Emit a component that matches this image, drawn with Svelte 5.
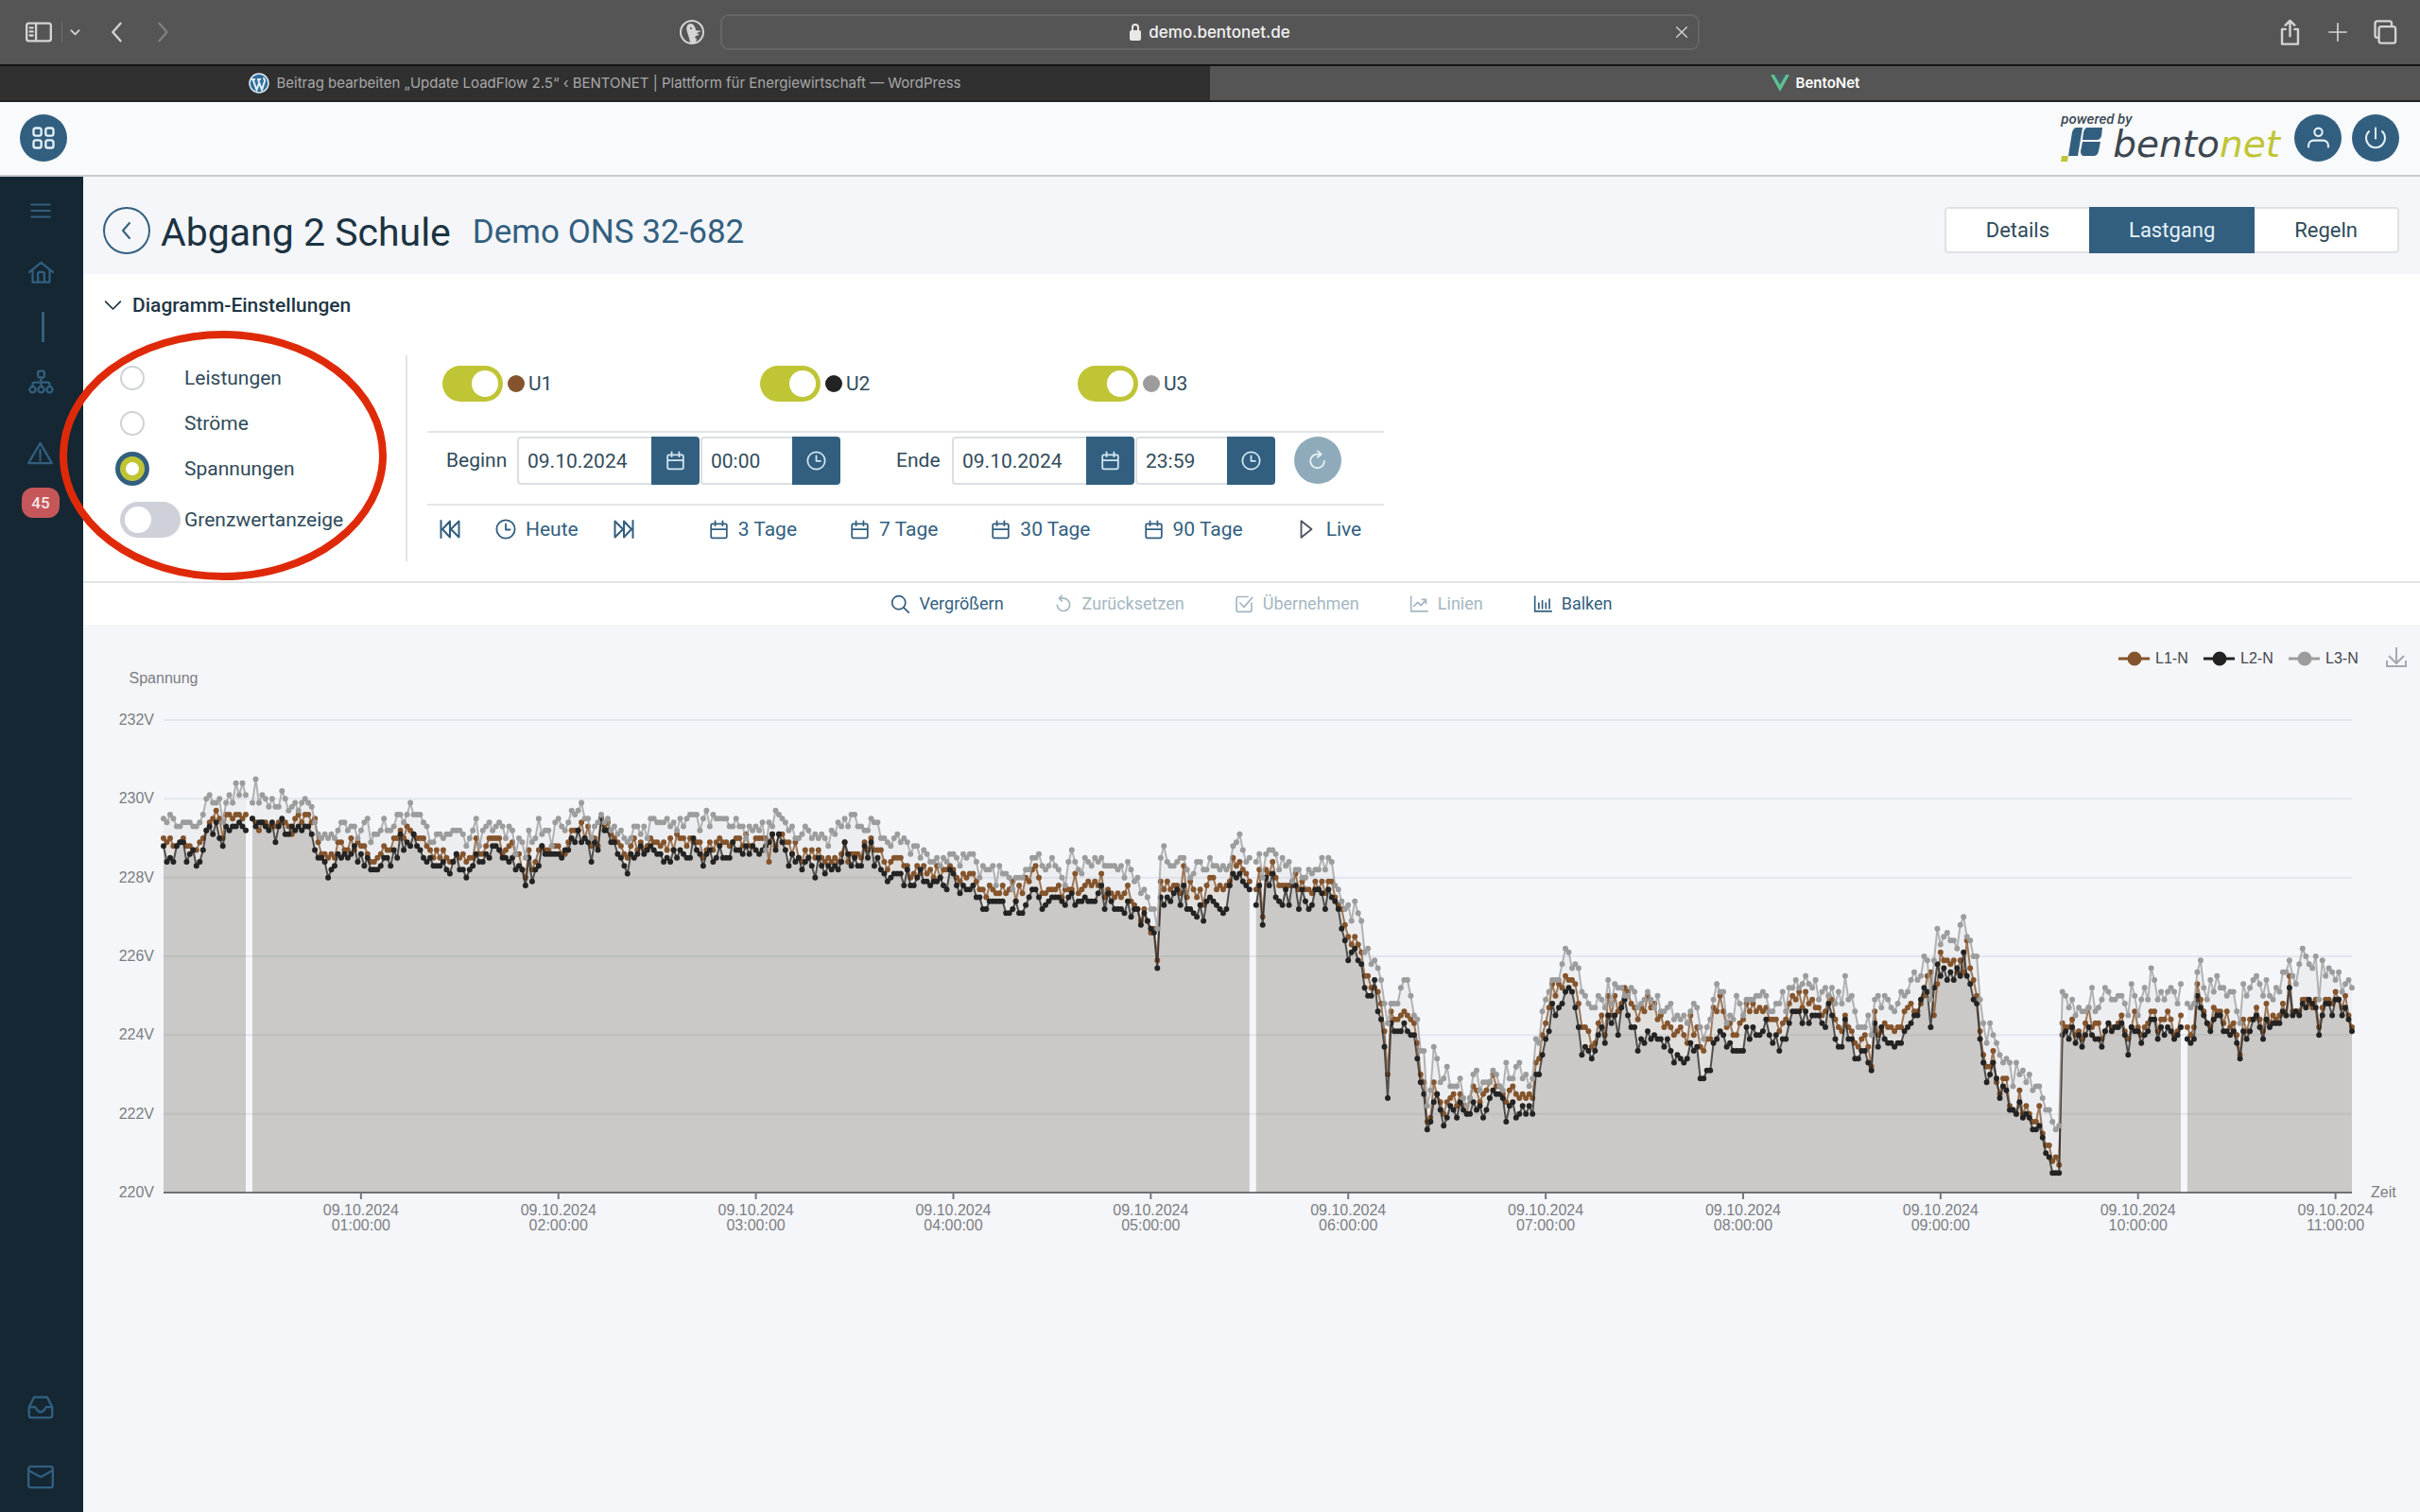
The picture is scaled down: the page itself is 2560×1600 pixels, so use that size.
<script>
  const icons = {
    grid: 'M5 3h3a2 2 0 0 1 2 2v3a2 2 0 0 1-2 2H5a2 2 0 0 1-2-2V5a2 2 0 0 1 2-2zM16 3h3a2 2 0 0 1 2 2v3a2 2 0 0 1-2 2h-3a2 2 0 0 1-2-2V5a2 2 0 0 1 2-2zM5 14h3a2 2 0 0 1 2 2v3a2 2 0 0 1-2 2H5a2 2 0 0 1-2-2v-3a2 2 0 0 1 2-2zM16 14h3a2 2 0 0 1 2 2v3a2 2 0 0 1-2 2h-3a2 2 0 0 1-2-2v-3a2 2 0 0 1 2-2z',
    menu: 'M3 6h18M3 12h18M3 18h18',
    home: 'M1 11.500L12 2.500l11 9M4 10v11h16V10M9 21v-8a1.500 1.500 0 0 1 1.500-1.500h3A1.500 1.500 0 0 1 15 13v8',
    sitemap: 'M10.500 1.500h3a1.500 1.500 0 0 1 1.500 1.500v3a1.500 1.500 0 0 1-1.500 1.500h-3A1.500 1.500 0 0 1 9 6V3a1.500 1.500 0 0 1 1.500-1.500zM12 7.500V12M4 16v-2a2 2 0 0 1 2-2h12a2 2 0 0 1 2 2v2M12 12v4M4 16a2.800 2.800 0 1 1 0 5.600a2.800 2.800 0 1 1 0-5.600zM12 16a2.800 2.800 0 1 1 0 5.600a2.800 2.800 0 1 1 0-5.600zM20 16a2.800 2.800 0 1 1 0 5.600a2.800 2.800 0 1 1 0-5.600z',
    warning: 'M12 2.500L23 21.500H1zM12 9v6.500M12 17.500v1.500',
    inbox: 'M1.500 12L6 3h12l4.500 9v7.500a2 2 0 0 1-2 2h-17a2 2 0 0 1-2-2zM1.500 12H7c1 0 1.500 4.500 5 4.500S16 12 17 12h5.500',
    mail: 'M3 2.500h18a2 2 0 0 1 2 2v15a2 2 0 0 1-2 2H3a2 2 0 0 1-2-2v-15a2 2 0 0 1 2-2zM1 6l11 6 11-6',
    user: 'M12 2.500a4 4 0 1 1 0 8a4 4 0 1 1 0-8zM2 21.500v-1.500c0-3 2.500-5 5-5h10c2.500 0 5 2 5 5v1.500',
    power: 'M12 1.500v11M5 5a10 10 0 1 0 14 0',
    left: 'M15 4l-7 8 7 8',
    right: 'M9 4l7 8-7 8',
    down: 'M3 7l9 9 9-9',
    calendar: 'M4 5h16a1.500 1.500 0 0 1 1.500 1.500V20a2 2 0 0 1-2 2h-15a2 2 0 0 1-2-2V6.500A1.500 1.500 0 0 1 4 5zM2.500 11.500h19M7.500 1.500V7M16.500 1.500V7',
    clock: 'M12 1.500a10.500 10.500 0 1 1 0 21a10.500 10.500 0 1 1 0-21zM12 6v6.500h5',
    refresh: 'M12 1.500l4 3.500-4 3.500M15.500 5h-4a8 8 0 1 0 8 8',
    undo: 'M10 1.500L6.500 5 10 8.500M7 5h5a8 8 0 1 1-8 8.500',
    first: 'M2.500 3v18M12 3.500v17L4 12zM21.500 3.500v17L13 12z',
    last: 'M21.500 3v18M12 3.500v17L20 12zM2.500 3.500v17L11 12z',
    play: 'M6 2.500v19L18 12z',
    search: 'M10.500 2a8.500 8.500 0 1 1 0 17a8.500 8.500 0 1 1 0-17zM17 17l6 6',
    check: 'M21.500 11v9a2 2 0 0 1-2 2h-15a2 2 0 0 1-2-2V5a2 2 0 0 1 2-2H17M7 11l5 5L22.500 4',
    line: 'M2 2.500v19h21M5.500 15l5-5 4 4 6.500-7M16 6.500h5v5',
    bars: 'M2 2.500v19h21M7 11v7M11.500 8v10M16 11v7M20.500 6v12',
    close: 'M4 4l16 16M20 4L4 20',
    share: 'M8 9H5v13h14V9h-3M12 15V2M8 5.500L12 1.500l4 4',
    plus: 'M12 1v22M1 12h22',
    copies: 'M8.500 7h11a2 2 0 0 1 2 2v11a2 2 0 0 1-2 2h-11a2 2 0 0 1-2-2V9a2 2 0 0 1 2-2zM6.500 17H5a2 2 0 0 1-2-2V4a2 2 0 0 1 2-2h11a2 2 0 0 1 2 2v3',
    panel: 'M3 4h18a2 2 0 0 1 2 2v12a2 2 0 0 1-2 2H3a2 2 0 0 1-2-2V6a2 2 0 0 1 2-2zM9.500 4v16M4 8h2.500M4 11.500h2.500M4 15h2.500'
  };

  const modes = ['Leistungen', 'Ströme', 'Spannungen'];
  const phases = [
    { name: 'U1', tone: 'brown' },
    { name: 'U2', tone: 'black' },
    { name: 'U3', tone: 'grey' }
  ];
  const ranges = ['3 Tage', '7 Tage', '30 Tage', '90 Tage'];
  const tools = [
    { label: 'Vergrößern', icon: 'search', off: false },
    { label: 'Zurücksetzen', icon: 'undo', off: true },
    { label: 'Übernehmen', icon: 'check', off: true },
    { label: 'Linien', icon: 'line', off: true },
    { label: 'Balken', icon: 'bars', off: false }
  ];

  // One reading per minute, in tenths of a volt above 220 V: [first minute, readings].
  const rawL1 = [
    [0, '90 89 90 88 88 89 90 88 88 87 87 89 90 92 94 95 97 95 90 96 96 95 96 96 95 96'],
    [27, '95 94 92 94 94 93 93 93 94 94 94 93 91 95 96 94 96 96 94 95 89 86 86 87'],
    [50, '85 86 85 89 89 87 87 90 87 89 88 88 86 84 84 85 86 88 87 87 90 90 92 90 93 92'],
    [76, '91 90 90 90 88 87 85 87 85 87 85 84 84 86 85 86 84 85 85 90 86 86 88 90 90 90 90'],
    [103, '86 87 88 89 86 86 82 80 87 82 84 87 88 87 87 88 88 88 86 86 89 92 92 92 94'],
    [128, '90 93 88 90 88 95 93 94 91 90 89 88 86 85 88 90 87 89 87 88 90 89 89 88 89 87 90 87 91'],
    [157, '90 90 88 90 89 89 89 85 87 89 87 89 90 89 89 88 89 90 90 88 91 88 88 90 90 90 90'],
    [184, '84 91 88 91 91 89 89 86 89 85 84 87 85 87 85 87 85 84 85 84 85 84 86 89 84 86'],
    [210, '86 86 85 89 87 90 87 87 87 84 82 84 85 85 85 83 83 80 81 83 81 83 81 82 80 83 80'],
    [237, '82 82 83 82 80 79 81 80 81 81 79 77 77 75 78 77 76 76 78 76 77 79 74 78 76 80 79 82 83'],
    [266, '80 76 76 77 77 77 78 75 77 77 77 81 76 77 78 79 78 79 78 81 75 77 76 75 76 75 76 78'],
    [294, '74 73 72 69 72 69 66 67 59 79 77 79 77 78 78 76 83 75 79 77 75 77 73 78 80 80 77 78 77 78'],
    [324, '79 85 83 84 82 81 79'],
    [332, '77 82 70 82 81 84 80 78 78 78 78 78 81 77 79 77 77 76 79 77 79 76 79 79 75 73 72'],
    [359, '68 65 63 65 63 61 55 55 52 52 51 48 41 30 46 44 44 45 46 45 44 43 38 30 28'],
    [384, '18 19 28 25 23 20 23 24 25 22 25 22 20 24 27 26 23 25 26 28 30 27 27 25'],
    [408, '23 26 27 25 24 25 24 25 24 33 34 40 43 47 53 50 53 52 55 54 54 53 48 42 42 41'],
    [434, '37 38 43 45 40 50 45 50 46 48 52 51 48 47 44 47 46 50 47 48 44 45 42 43 42 40'],
    [460, '41 42 40 38 45 40 42 37 36 39 39 47 46 50 46 42 43 40 40 43 44'],
    [481, '48 46 48 46 47 46 47 44 44 44 41 43 44 48 50 49 51 47 51 48 49 47 47 45 46'],
    [506, '50 49 44 42 41 45 42 41 38 37 39 40 37 32 46 40 41 43 42 42 41 42 42'],
    [529, '46 47 48 46 46 48 50 55 56 45 53 61 59 59 58 59 56 59 56 64 57 54 50 52'],
    [552, '41 35 32 32 36 28 25 29 29 22 21 20 26 20 22 20 18 18 22'],
    [571, '15 12 12 8 9 7 43 42 42 44 40 41 39 43 47 42 43 43 39 41 43 42 42 43'],
    [595, '45 41 39 42 46 42 40 42 43 46 46 41 44 44 46 44 40 41 45'],
    [615, '42 40 42 53 49 46 43 42 47 46 46 43 46 42 43 40 35 44 41 44 44 47 44 41'],
    [639, '48 43 45 44 45 48 45 55 46 46 46 49 49 48 47 49 42 47 49 49 48 51 49 47 50 45 42']
  ];
  const rawL2 = [
    [0, '88 84 85 84 88 89 89 84 86 87 83 84 87 92 93 91 94 90 88 93 92 93 93 94 93 92'],
    [27, '95 93 94 94 93 92 94 89 93 95 91 91 93 92 93 92 93 93 91 87 85 85 84'],
    [50, '80 82 83 86 85 86 85 86 88 84 86 83 85 82 82 82 83 85 85 83 87 85 91 87 89 88'],
    [76, '91 88 87 85 84 85 83 83 83 84 82 81 84 86 82 82 80 82 83 86 84 84 86 85 88 88 87'],
    [103, '85 85 84 85 82 83 82 78 85 79 82 83 88 86 86 86 86 86 85 87 87 90 89 92 89'],
    [128, '90 89 84 89 87 95 92 92 89 89 86 85 83 81 86 85 86 88 86 87 88 87 86 86 84 85 84 87 85'],
    [157, '87 86 85 85 90 87 86 83 86 87 84 85 88 85 85 85 89 87 87 86 88 86 88 87 86 87 88'],
    [184, '89 91 87 91 89 87 83 86 84 85 82 84 85 83 80 85 83 81 83 82 83 82 84 89 86 83'],
    [210, '85 83 83 88 85 89 83 85 82 81 79 80 81 81 81 78 82 78 78 80 82 79 79 78 79 79 80'],
    [237, '78 77 82 81 78 76 78 77 77 78 75 75 72 72 74 74 74 74 74 71 71 72 74 71 71 73 75 77 77'],
    [266, '75 72 73 74 75 75 75 74 73 75 76 73 74 74 75 74 74 74 76 78 72 76 74 72 72 72 71 74'],
    [294, '70 72 72 68 71 69 67 66 57 75 73 75 74 76 77 73 78 72 72 71 70 73 69 74 75 74 73 72 71 72'],
    [324, '78 81 80 81 79 78 77'],
    [332, '73 78 68 80 78 81 75 74 73 77 73 79 78 72 77 74 72 73 77 77 76 72 77 75 74 72 67'],
    [359, '64 59 61 62 59 58 52 50 50 54 46 44 37 24 43 41 41 41 43 41 40 40 34 28 25'],
    [384, '16 18 23 25 21 17 19 22 21 19 23 21 20 20 23 21 22 19 21 24 26 25 25 24'],
    [408, '18 22 23 19 20 22 20 22 20 30 30 35 39 41 48 45 47 48 51 52 51 47 42 35 37 36'],
    [434, '34 36 40 42 38 45 43 45 40 47 49 45 42 42 36 39 38 41 39 40 39 39 37 39 36 33'],
    [460, '35 34 33 34 38 36 37 29 29 31 31 38 39 41 40 37 38 36 36 36 36'],
    [481, '42 39 42 40 40 41 44 40 38 40 36 39 39 43 46 46 46 43 46 43 45 45 45 43 42'],
    [506, '48 45 39 37 37 44 39 39 34 34 36 36 33 31 43 37 42 39 38 38 37 38 38'],
    [529, '41 42 43 45 45 49 52 51 42 52 58 55 57 54 56 54 57 55 61 55 53 49 48'],
    [552, '39 33 28 30 33 29 24 27 26 21 21 20 23 19 20 19 16 16 17'],
    [571, '14 10 9 5 5 5 40 41 39 42 38 40 37 40 42 40 39 39 37 41 43 41 42 42'],
    [595, '43 40 35 42 41 41 38 40 41 44 44 39 42 40 42 41 39 40 42'],
    [615, '39 38 39 50 47 45 43 41 44 45 45 41 41 40 41 38 34 41 39 41 44 45 42 39'],
    [639, '44 42 43 43 43 46 45 52 45 46 45 48 47 49 48 47 40 45 48 48 45 49 49 45 47 44 41']
  ];
  const rawL3 = [
    [0, '95 94 96 95 93 93 94 94 94 93 93 94 96 100 101 99 99 100 94 99 101 99 104 101 104 101'],
    [27, '99 105 99 101 100 98 100 98 98 102 100 97 98 99 97 99 100 99 98 94 91 90'],
    [49, '91 90 91 90 92 94 94 92 93 93 90 92 94 95 89 91 91 92 95 92 92 93 96 96 94 96 99'],
    [76, '96 96 96 94 93 89 89 91 91 90 91 91 92 92 92 91 88 90 92 95 88 92 93 94 92 93 94'],
    [103, '93 90 93 92 86 90 89 85 92 89 90 95 91 92 92 88 94 95 93 92 94 97 96 97 99'],
    [128, '95 95 90 93 94 96 94 95 92 93 91 92 90 89 90 93 93 91 93 90 95 95 94 94 94 95 93 94 92'],
    [157, '95 93 95 96 96 96 92 95 97 93 96 95 95 95 95 93 93 95 93 93 90 93 92 93 92 94'],
    [183, '87 94 93 97 96 95 94 92 93 90 90 91 93 92 90 91 90 91 90 88 92 91 94 93 95 93 96'],
    [211, '93 93 92 92 95 94 94 90 90 89 88 90 91 89 90 89 86 88 88 85 87 86 84 84 85 83 85 84'],
    [239, '86 86 85 83 86 85 86 86 84 80 83 82 82 83 78 83 81 81 80 77 80 80 80 82 82 85'],
    [265, '85 86 83 82 83 85 83 82 80 78 84 87 84 82 81 85 84 83 85 84 85 83 83 83 83 82'],
    [291, '83 80 84 82 79 80 76 77 75 72 72 67 85 88 84 83 83 84 85 85 82 80 81 84 84 82 82 85 83'],
    [320, '83 82 83 82 83 88 89 91 87 84 85'],
    [332, '84 86 80 86 87 87 86 82 85 83 84 79 82 82 80 80 82 81 82 82 85 82 85 84 78 77 74'],
    [359, '72 73 69 74 71 69 61 62 58 59 57 54 48 43 48 48 48 52 54 54 50 45 44 36 36'],
    [384, '22 26 37 34 28 29 32 27 27 27 29 24 22 24 30 31 26 28 28 28 31 30 27 26'],
    [408, '33 29 29 32 33 29 30 27 29 39 38 46 49 51 54 54 54 58 62 61 57 58 57 51 50 48'],
    [434, '47 47 50 49 47 54 48 53 52 52 50 50 52 51 47 48 49 51 49 47 50 46 46 47 48 44'],
    [460, '45 44 45 43 46 48 47 42 39 42 44 49 53 51 51 43 45 44 50 48 45'],
    [481, '49 49 49 50 50 51 50 46 46 48 48 51 46 52 52 54 52 53 55 53 52 54 49 51 52'],
    [506, '50 52 48 51 48 55 49 50 46 42 42 42 45 40 49 50 47 50 49 47 46 48 51'],
    [529, '50 51 54 56 54 55 60 59 49 59 67 63 65 66 64 64 62 68 70 65 64 60 60'],
    [552, '49 43 38 43 40 38 35 33 34 33 27 33 30 31 28 30 26 27 27'],
    [571, '24 21 21 18 16 17 51 50 47 49 45 47 46 46 47 52 46 47 49 52 51 49 49 50'],
    [595, '50 48 45 53 50 45 49 52 49 57 54 49 51 49 51 52 51 48 53'],
    [615, '48 47 48 56 59 52 49 54 51 55 52 52 50 51 51 46 43 53 50 52 54 55 53 50'],
    [639, '54 50 49 52 51 56 56 59 55 53 58 62 60 58 57 60 49 59 55 57 56 54 56 51 53 54 52']
  ];

  const LAST = 665;
  const gaps = [26, 331, 614];

  function expand(raw) {
    const out = new Array(LAST + 1).fill(null);
    for (const [start, text] of raw) {
      text.split(' ').forEach((v, k) => {
        if (start + k <= LAST) out[start + k] = 220 + Number(v) / 10;
      });
    }
    for (let i = 1; i <= LAST; i++) if (out[i] === null) out[i] = out[i - 1];
    for (const g of gaps) out[g] = null;
    return out;
  }

  const series = [
    { id: 'L1-N', tone: 'brown', data: expand(rawL1) },
    { id: 'L2-N', tone: 'black', data: expand(rawL2) },
    { id: 'L3-N', tone: 'grey', data: expand(rawL3) }
  ];

  const top = 101;
  const plotHeight = 500;
  const left = 85;
  let width = $state(2472);
  const right = $derived(width - 72);
  const levels = [232, 230, 228, 226, 224, 222, 220];
  const hours = [1, 2, 3, 4, 5, 6, 7, 8, 9, 10, 11];
  const base = top + plotHeight;

  const x = (i) => left + ((right - left) * i) / LAST;
  const y = (v) => top + ((232 - v) * plotHeight) / 12;

  function build(data) {
    let line = '';
    let area = '';
    let dots = '';
    let open = false;
    data.forEach((v, i) => {
      if (v === null) {
        if (open) area += `L${x(i - 1)} ${base}Z`;
        open = false;
        return;
      }
      const px = x(i).toFixed(1);
      const py = y(v).toFixed(1);
      line += `${open ? 'L' : 'M'}${px} ${py}`;
      area += open ? `L${px} ${py}` : `M${px} ${base}L${px} ${py}`;
      dots += `M${px} ${py}h0`;
      open = true;
    });
    if (open) area += `L${x(data.length - 1)} ${base}Z`;
    return { line, area, dots };
  }

  const shapes = $derived(series.map((s) => ({ tone: s.tone, ...build(s.data) })));
</script>

{#snippet icon(name, size = 24)}
  <svg class="icon" width={size} height={size} viewBox="0 0 24 24" aria-hidden="true"><path d={icons[name]} /></svg>
{/snippet}

<div class="page">
  <div class="browser">
    <div class="side">
      <button aria-label="Seitenleiste">{@render icon('panel', 28)}</button>
      <span class="bar"></span>
      <button class="tiny" aria-label="Tabgruppen">{@render icon('down', 11)}</button>
      <button class="back" aria-label="Zurück">{@render icon('left', 28)}</button>
      <button class="dim" aria-label="Vor">{@render icon('right', 28)}</button>
    </div>
    <div class="middle">
      <svg width="26" height="26" viewBox="0 0 26 26" aria-hidden="true">
        <circle cx="13" cy="13" r="12" fill="none" stroke="#d4d4d4" stroke-width="2" />
        <path d="M8 6c1-2 5-3 7 0 1 1 2 3 2 5l6 1-5 2 3 2-4 1-1 2 2 1-1 4-6 1c0-4-2-8-3-12-1-3-1-5 0-7z" fill="#d4d4d4" />
        <circle cx="12" cy="9" r="1" fill="#555" />
      </svg>
      <div class="address">
        <span class="site"><svg width="12" height="20" viewBox="0 0 12 20" aria-hidden="true"><rect x="0" y="8" width="12" height="11" rx="2" fill="#e8e8e8" /><path d="M3 9V5a3 3 0 0 1 6 0v4" fill="none" stroke="#e8e8e8" stroke-width="2" /></svg>demo.bentonet.de</span>
        <button aria-label="Laden abbrechen">{@render icon('close', 16)}</button>
      </div>
    </div>
    <div class="side end">
      <button aria-label="Teilen">{@render icon('share', 29)}</button>
      <button aria-label="Neuer Tab">{@render icon('plus', 20)}</button>
      <button aria-label="Tabübersicht">{@render icon('copies', 28)}</button>
    </div>
  </div>
  <div class="tabs">
    <button class="tab">
      <svg width="22" height="22" viewBox="0 0 22 22" aria-hidden="true">
        <circle cx="11" cy="11" r="10" fill="#2f6f9c" stroke="#e4eef5" stroke-width="1.500" />
        <path d="M3 7h4M4.500 7l4 11 2.500-7M9 7h4M10 7l4 11 3-9c.5-2-1-2-1-4" fill="none" stroke="#e4eef5" stroke-width="2" />
      </svg>
      Beitrag bearbeiten „Update LoadFlow 2.5“ ‹ BENTONET | Plattform für Energiewirtschaft — WordPress
    </button>
    <button class="tab active">
      <svg width="20" height="18" viewBox="0 0 20 18" aria-hidden="true"><path d="M0 0h4l6 10.500L16 0h4L10 18z" fill="#5fc08f" /><path d="M4 0h3.500L10 4.500 12.500 0H16l-6 10.500z" fill="#45606a" /></svg>
      BentoNet
    </button>
  </div>

  <header>
    <button class="round" aria-label="Anwendungen">{@render icon('grid', 28)}</button>
    <div class="brand">
      <span class="powered">powered by</span>
      <div class="logo">
        <svg width="45" height="38" viewBox="0 0 45 38" aria-hidden="true">
          <path d="M17 1h6l-5 30H8l4-25c1-3 2-5 5-5z" fill="#325f7f" />
          <path d="M28 1h16l-1 9c-1 3-3 4-5 4H23l1-8c1-3 2-5 4-5z" fill="#325f7f" />
          <path d="M23 16h19l-2 10c-1 4-3 5-6 5h-9c-3 0-4-2-4-5z" fill="#325f7f" />
          <path d="M1 31h7l-1 6H0z" fill="#bfc535" />
        </svg>
        <span class="word">bento<b>net</b></span>
      </div>
    </div>
    <button class="round" aria-label="Benutzer">{@render icon('user', 25)}</button>
    <button class="round" aria-label="Abmelden">{@render icon('power', 24)}</button>
  </header>

  <div class="body">
    <nav>
      <a href="#menu" aria-label="Menü">{@render icon('menu', 26)}</a>
      <a class="home" href="#home" aria-label="Start">{@render icon('home', 27)}</a>
      <span class="mark"></span>
      <a class="tree" href="#netz" aria-label="Netz">{@render icon('sitemap', 27)}</a>
      <a class="alert" href="#alarme" aria-label="Alarme">{@render icon('warning', 27)}<span class="badge">45</span></a>
      <a class="inbox" href="#eingang" aria-label="Eingang">{@render icon('inbox', 28)}</a>
      <a class="mail" href="#post" aria-label="Nachrichten">{@render icon('mail', 28)}</a>
    </nav>

    <main>
      <div class="heading">
        <button class="return" aria-label="Zurück">{@render icon('left', 24)}</button>
        <h1>Abgang 2 Schule</h1>
        <h2>Demo ONS 32-682</h2>
        <div class="segments">
          <button>Details</button>
          <button class="on">Lastgang</button>
          <button>Regeln</button>
        </div>
      </div>

      <section class="settings">
        <button class="fold">{@render icon('down', 21)}Diagramm-Einstellungen</button>
        <div class="options">
          <div class="modes">
            {#each modes as mode}
              <label class="mode"><input type="radio" name="mode" checked={mode === 'Spannungen'} />{mode}</label>
            {/each}
            <label class="mode limit"><input class="switch" type="checkbox" />Grenzwertanzeige</label>
            <svg class="ring" viewBox="0 0 346 264" aria-hidden="true"><ellipse cx="173" cy="132" rx="169" ry="128" /></svg>
          </div>
          <div class="controls">
            <div class="phases">
              {#each phases as phase}
                <label class="phase"><input class="switch" type="checkbox" checked /><span class="dot {phase.tone}"></span>{phase.name}</label>
              {/each}
            </div>
            <div class="dates">
              <label for="from">Beginn</label>
              <div class="field">
                <input class="date" id="from" type="text" value="09.10.2024" />
                <button aria-label="Beginn Datum">{@render icon('calendar', 21)}</button>
                <input class="time" type="text" value="00:00" aria-label="Beginn Uhrzeit" />
                <button aria-label="Beginn Uhrzeit wählen">{@render icon('clock', 21)}</button>
              </div>
              <label class="until" for="to">Ende</label>
              <div class="field">
                <input class="date" id="to" type="text" value="09.10.2024" />
                <button aria-label="Ende Datum">{@render icon('calendar', 21)}</button>
                <input class="time" type="text" value="23:59" aria-label="Ende Uhrzeit" />
                <button aria-label="Ende Uhrzeit wählen">{@render icon('clock', 21)}</button>
              </div>
              <button class="reload" aria-label="Aktualisieren">{@render icon('refresh', 22)}</button>
            </div>
            <div class="quick">
              <div class="step">
                <button aria-label="Zurück">{@render icon('first', 24)}</button>
                <button>{@render icon('clock', 22)}Heute</button>
                <button aria-label="Weiter">{@render icon('last', 24)}</button>
              </div>
              {#each ranges as range}
                <button>{@render icon('calendar', 21)}{range}</button>
              {/each}
              <button class="live">{@render icon('play', 22)}Live</button>
            </div>
          </div>
        </div>
      </section>

      <div class="tools">
        {#each tools as tool}
          <button disabled={tool.off}>{@render icon(tool.icon, 20)}{tool.label}</button>
        {/each}
      </div>

      <div class="chart" bind:clientWidth={width}>
        <svg {width} height="680" role="img" aria-label="Spannung über Zeit">
          {#each levels as level}
            <line class="grid" class:axis={level === 220} x1={left} x2={right} y1={y(level)} y2={y(level)} />
            <text class="level" x={left - 10} y={y(level) + 5}>{level}V</text>
          {/each}
          <text class="center" x={left} y="62">Spannung</text>
          {#each hours as hour}
            <line class="axis" x1={x(hour * 60)} x2={x(hour * 60)} y1={base} y2={base + 7} />
            <text class="center" x={x(hour * 60)} y={base + 24}>09.10.2024</text>
            <text class="center" x={x(hour * 60)} y={base + 40}>{String(hour).padStart(2, '0')}:00:00</text>
          {/each}
          <text x={right + 20} y={base + 5}>Zeit</text>
          {#each shapes as shape}
            <path class="area {shape.tone}" d={shape.area} />
          {/each}
          {#each shapes as shape}
            <path class="line {shape.tone}" d={shape.line} />
            <path class="dots {shape.tone}" d={shape.dots} />
          {/each}
          {#each series as s, k}
            <g transform="translate({width - 319 + k * 90} 36)">
              <path class="key {s.tone}" d="M0 0h33" />
              <circle class="key {s.tone}" cx="17" cy="0" r="6" />
              <text class="name" x="39" y="5">{s.id}</text>
            </g>
          {/each}
          <path class="save" transform="translate({width - 35} 24)" d="M10 0v16M2 9l8 8 8-8M0 14v6h20v-6" />
        </svg>
      </div>
    </main>
  </div>
</div>

<style>
  :global(body) {
    margin: 0;
  }
  .page {
    min-height: 100vh;
    display: flex;
    flex-direction: column;
    background: #f5f6f9;
    color: #2f4a5a;
    font: 21px/28px Roboto, sans-serif;
  }
  .page :global(*) {
    box-sizing: border-box;
  }
  button {
    border: 0;
    padding: 0;
    background: none;
    color: inherit;
    font: inherit;
    display: flex;
    align-items: center;
    justify-content: center;
  }
  .icon {
    display: block;
    flex: none;
    fill: none;
    stroke: currentColor;
    stroke-width: 2;
    stroke-linecap: round;
    stroke-linejoin: round;
  }

  .browser {
    height: 68px;
    padding: 0 23px 0 27px;
    display: flex;
    align-items: center;
    background: #555;
    color: #d4d4d4;
    font-family: Inter, sans-serif;
  }
  .side {
    flex: 1;
    display: flex;
    align-items: center;
  }
  .bar {
    width: 1px;
    height: 24px;
    margin: 0 8px 0 10px;
    background: #6c6c6c;
  }
  .tiny :global(path) {
    stroke-width: 4;
  }
  .back {
    margin: 0 20px 0 25px;
  }
  .dim {
    color: #808080;
  }
  .side.end {
    justify-content: flex-end;
    gap: 26px;
  }
  .middle {
    flex: none;
    width: 43%;
    display: flex;
    align-items: center;
    gap: 17px;
    margin-right: 47px;
  }
  .address {
    flex: 1;
    height: 38px;
    padding: 0 9px 0 25px;
    display: flex;
    align-items: center;
    border: 2px solid #656565;
    border-radius: 9px;
  }
  .site {
    flex: 1;
    display: flex;
    align-items: center;
    justify-content: center;
    gap: 8px;
    color: #f2f2f2;
    font-size: 17px;
    font-weight: 500;
  }
  .tabs {
    height: 40px;
    display: flex;
    border-top: 2px solid #151515;
    border-bottom: 2px solid #222;
    background: #555;
  }
  .tab {
    flex: 1;
    gap: 7px;
    background: #303030;
    color: #a8a8a8;
    font: 15px/20px Inter, sans-serif;
  }
  .tab.active {
    background: #555;
    color: #fff;
    font-weight: 600;
  }

  header {
    height: 79px;
    padding: 0 22px 2px 21px;
    display: flex;
    align-items: center;
    gap: 11px;
    border-bottom: 2px solid #c9cbce;
    background: #f9fafc;
  }
  .round {
    width: 50px;
    height: 50px;
    border-radius: 50%;
    background: #325f7f;
    color: #e4f1f8;
  }
  .brand {
    margin-left: auto;
    margin-right: 4px;
    display: flex;
    flex-direction: column;
  }
  .powered {
    font: italic 500 15px/15px Roboto, sans-serif;
    color: #3c4a55;
  }
  .logo {
    display: flex;
    gap: 10px;
  }
  .word {
    font: italic 200 39px/38px "DejaVu Sans", sans-serif;
    color: #3c4650;
  }
  .word b {
    font-weight: 200;
    color: #bfc535;
  }

  .body {
    flex: 1;
    display: flex;
  }
  nav {
    flex: none;
    width: 88px;
    padding: 23px 2px 23px 0;
    display: flex;
    flex-direction: column;
    align-items: center;
    background: #152733;
    color: #325f7f;
  }
  nav a {
    color: inherit;
    text-decoration: none;
  }
  .home {
    margin-top: 39px;
  }
  .mark {
    width: 3px;
    height: 32px;
    margin: 28px 0 29px 4px;
    background: #325f7f;
  }
  .alert {
    margin-top: 48px;
    display: flex;
    flex-direction: column;
    align-items: center;
    gap: 23px;
  }
  .badge {
    padding: 0 10px;
    border-radius: 12px;
    background: #c5575a;
    color: #f6e4e4;
    font: 500 17px/32px Roboto, sans-serif;
  }
  .inbox {
    margin-top: auto;
    margin-bottom: 46px;
  }

  main {
    flex: 1;
    min-width: 0;
  }
  .heading {
    height: 103px;
    padding: 10px 22px 0 21px;
    display: flex;
    align-items: center;
  }
  .return {
    width: 50px;
    height: 50px;
    border: 2px solid #325f7f;
    border-radius: 50%;
    color: #325f7f;
  }
  h1,
  h2 {
    margin: 0;
    padding-top: 4px;
    font-weight: 400;
    line-height: 48px;
  }
  h1 {
    margin-left: 11px;
    font-size: 41px;
    color: #1b3342;
  }
  h2 {
    margin-left: 23px;
    font-size: 35px;
    color: #325f7f;
  }
  .segments {
    margin-left: auto;
    height: 49px;
    display: flex;
    border: 2px solid #dfe2e5;
    border-radius: 4px;
    background: #fff;
    font-size: 22px;
  }
  .segments button {
    padding: 0 42px;
  }
  .segments .on {
    margin: -2px 0;
    background: #325f7f;
    color: #e8f3fa;
  }

  .settings {
    background: #fff;
    padding: 0 21px;
    border-bottom: 2px solid #e2e5e8;
  }
  .fold {
    height: 66px;
    gap: 10px;
    font-weight: 500;
    color: #1f3644;
  }
  .options {
    height: 259px;
    display: flex;
    align-items: flex-start;
  }
  .modes {
    position: relative;
    width: 322px;
    height: 218px;
    margin-top: 20px;
    padding-left: 18px;
    border-right: 2px solid #dfe2e5;
  }
  .mode {
    height: 48px;
    display: flex;
    align-items: center;
    gap: 42px;
  }
  .mode.limit {
    height: 60px;
    gap: 4px;
  }
  .mode input[type='radio'] {
    appearance: none;
    width: 26px;
    height: 26px;
    margin: 0;
    border: 2px solid #ced1d6;
    border-radius: 50%;
    background: #fff;
  }
  .mode input[type='radio']:checked {
    border: 6px solid #bfc535;
    box-shadow: 0 0 0 5px #325f7f;
  }
  .switch {
    appearance: none;
    flex: none;
    width: 64px;
    height: 38px;
    margin: 0;
    padding: 5px;
    display: flex;
    border-radius: 19px;
    background: #ced1d9;
  }
  .switch::before {
    content: '';
    width: 28px;
    height: 28px;
    border-radius: 50%;
    background: #fff;
  }
  .switch:checked {
    justify-content: flex-end;
    background: #bfc535;
  }
  .ring {
    position: absolute;
    left: -46px;
    top: -26px;
    width: 346px;
    height: 264px;
    pointer-events: none;
  }
  .ring ellipse {
    fill: none;
    stroke: #df2a0a;
    stroke-width: 8;
  }
  .controls {
    width: 1012px;
    margin-left: 21px;
  }
  .phases {
    height: 100px;
    padding-left: 16px;
    display: grid;
    grid-template-columns: repeat(3, 336px);
    align-items: center;
  }
  .phase {
    display: flex;
    align-items: center;
    gap: 4px;
  }
  .dot {
    width: 18px;
    height: 18px;
    margin-left: 1px;
    border-radius: 50%;
  }
  .dot.brown {
    background: #84542c;
  }
  .dot.black {
    background: #232323;
  }
  .dot.grey {
    background: #9c9c9c;
  }
  .dates {
    height: 79px;
    padding: 4px 0 0 20px;
    display: flex;
    align-items: flex-start;
    border-top: 2px solid #e3e6e9;
    border-bottom: 2px solid #e3e6e9;
    line-height: 50px;
  }
  .dates label {
    width: 75px;
  }
  .dates .until {
    width: 59px;
    margin-left: 59px;
  }
  .field {
    height: 51px;
    display: flex;
  }
  .field input {
    height: 51px;
    padding: 0 9px;
    border: 2px solid #dcdfe2;
    border-right: 0;
    border-radius: 4px 0 0 4px;
    background: #fff;
    color: #334c5b;
    font: inherit;
  }
  .date {
    width: 142px;
  }
  .time {
    width: 97px;
    margin-left: 1px;
  }
  .field button {
    width: 51px;
    border-radius: 0 4px 4px 0;
    background: #325f7f;
    color: #d3e8f4;
  }
  .reload {
    width: 50px;
    height: 50px;
    margin-left: 20px;
    border-radius: 50%;
    background: #8fabbb;
    color: #e6f0f5;
  }
  .quick {
    height: 50px;
    padding-left: 12px;
    display: flex;
    align-items: center;
    gap: 56px;
    color: #325f7f;
  }
  .quick button {
    gap: 10px;
  }
  .step {
    display: flex;
    gap: 36px;
    margin-right: 22px;
  }
  .live :global(svg) {
    color: #4b5560;
  }

  .tools {
    height: 44px;
    display: flex;
    align-items: center;
    justify-content: center;
    gap: 53px;
    background: #fff;
    color: #325f7f;
    font-size: 18px;
  }
  .tools button {
    gap: 10px;
  }
  .tools button:disabled {
    color: #a4b7c2;
  }

  .chart svg {
    display: block;
  }
  .chart text {
    font: 16px "Liberation Sans", Arial, sans-serif;
    fill: #7b7e85;
  }
  .chart .level {
    text-anchor: end;
  }
  .chart .center {
    text-anchor: middle;
  }
  .chart .name {
    fill: #43464b;
  }
  .grid {
    stroke: #e3e6ed;
    stroke-width: 2;
  }
  .axis {
    stroke: #74777e;
    stroke-width: 2;
  }
  .chart .brown {
    --tone: #84542c;
  }
  .chart .black {
    --tone: #232323;
  }
  .chart .grey {
    --tone: #9c9c9c;
  }
  .area {
    fill: var(--tone);
    fill-opacity: 0.1;
  }
  .area.black {
    fill-opacity: 0.12;
  }
  .area.grey {
    fill-opacity: 0.08;
  }
  .line {
    fill: none;
    stroke: var(--tone);
    stroke-width: 2;
    stroke-opacity: 0.75;
  }
  .dots {
    fill: none;
    stroke: var(--tone);
    stroke-width: 6;
    stroke-linecap: round;
  }
  .key {
    fill: var(--tone);
    stroke: var(--tone);
    stroke-width: 3;
  }
  .save {
    fill: none;
    stroke: #a5a8ad;
    stroke-width: 2;
  }
</style>
